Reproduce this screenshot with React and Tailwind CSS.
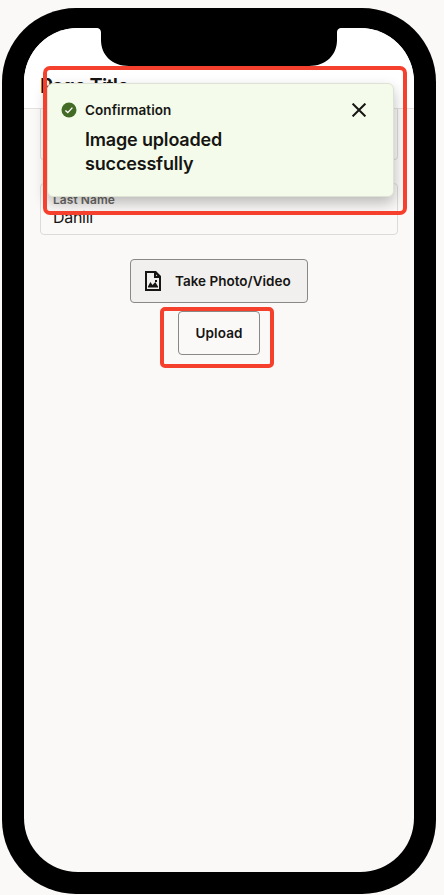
function Notch() {
  return (
    <svg
      className="absolute left-[72px] top-0"
      width="246"
      height="38"
      viewBox="0 0 246 38"
      fill="#000"
      aria-hidden="true"
    >
      <path d="M0 0C3.6 0 5 1.5 5 5V12C5 27 16 38 33 38H213C230 38 241 27 241 12V5C241 1.5 242.4 0 246 0Z" />
    </svg>
  );
}

function Toast() {
  return (
    <div className="absolute left-[23px] top-[55px] flex h-[114px] w-[347px] rounded-[6px] border border-[#dde2d4] bg-[#f4fbea] pl-[13px] pt-[16px] shadow-[0_6px_14px_rgba(0,0,0,0.26)]">
      <svg className="mt-[2px] shrink-0" width="16" height="16" viewBox="0 0 16 16" aria-hidden="true">
        <circle cx="8" cy="8" r="7.5" fill="#436b25" />
        <path d="M4.4 8.4L6.8 10.6L11.4 5.6" fill="none" stroke="#fff" strokeWidth="1.4" />
      </svg>
      <div className="ml-[8px] w-[200px] text-[#161513]">
        <div className="text-[13.5px] font-semibold leading-[20px] tracking-[0.08px]">Confirmation</div>
        <div className="mt-[8px] text-[18px] font-semibold leading-[24px] tracking-[-0.17px]">
          Image uploaded
          <br />
          successfully
        </div>
      </div>
      <svg className="ml-[67px] mt-[3px] shrink-0" width="14" height="14" viewBox="0 0 14 14" aria-hidden="true">
        <path d="M0.6 0.6L13.4 13.4M13.4 0.6L0.6 13.4" stroke="#161513" strokeWidth="2" />
      </svg>
    </div>
  );
}

function FileImageIcon() {
  return (
    <svg className="shrink-0" width="16" height="20" viewBox="0 0 16 20" aria-hidden="true">
      <path fill="#161513" fillRule="evenodd" d="M0 0H11L16 5V20H0ZM2 2V18H14V7H9V2Z" />
      <path fill="#161513" d="M3 16.5V15.5L5.4 11L7.5 14L10.3 11L13 15.5V16.5Z" />
      <rect x="10" y="9" width="2" height="2" fill="#161513" />
      <path fill="#f1f0ee" d="M11 3.6L12.4 5H11Z" />
    </svg>
  );
}

export default function App() {
  return (
    <div className="relative h-[895px] w-[444px] overflow-hidden bg-[#fbf9f8] pl-[2px] pt-[8px] font-['Inter','Liberation_Sans',sans-serif] text-[#161513]">
      <div className="h-[886px] w-[434px] rounded-[74px] bg-black px-[22px] pb-[22px] pt-[20px]">
        <div className="relative h-[844px] w-[390px] overflow-hidden rounded-[54px] bg-[#fbf9f8]">
          <header className="h-[81px] border-b border-[#e4e2e0] bg-white pl-[16px] pt-[46px]">
            <h1 className="text-[20px] font-semibold leading-[24px] tracking-[-0.8px]">Page Title</h1>
          </header>
          <main className="flex flex-col px-[16px]">
            <div className="h-[51px] rounded-b-[4px] border border-t-0 border-[#dddbd9]" />
            <div className="mt-[23px] h-[52px] rounded-[4px] border border-[#dddbd9] pl-[12px] pt-[8px]">
              <div className="text-[12px] font-semibold leading-[16px] tracking-[0.05px] text-[#6b6966]">Last Name</div>
              <div className="-mt-px text-[16px] leading-[20px] tracking-[-0.3px]">Dahill</div>
            </div>
            <div className="mt-[24px] flex flex-col items-center gap-2">
              <button className="flex h-[44px] w-[178px] items-center rounded-[4px] border border-[#8a8886] bg-[#f1f0ee] pl-[14px] text-[13.5px] font-semibold">
                <FileImageIcon />
                <span className="ml-[14px] whitespace-nowrap">Take Photo/Video</span>
              </button>
              <button className="h-[44px] w-[82px] rounded-[4px] border border-[#8a8886] text-[13.5px] font-semibold tracking-[0.1px]">
                Upload
              </button>
            </div>
          </main>
          <Notch />
          <Toast />
        </div>
      </div>
      <div className="absolute left-[43px] top-[66px] h-[149px] w-[364px] rounded-[7px] border-4 border-[#f4402c]" />
      <div className="absolute left-[160px] top-[307px] h-[61px] w-[114px] rounded-[5px] border-4 border-[#f4402c]" />
    </div>
  );
}
